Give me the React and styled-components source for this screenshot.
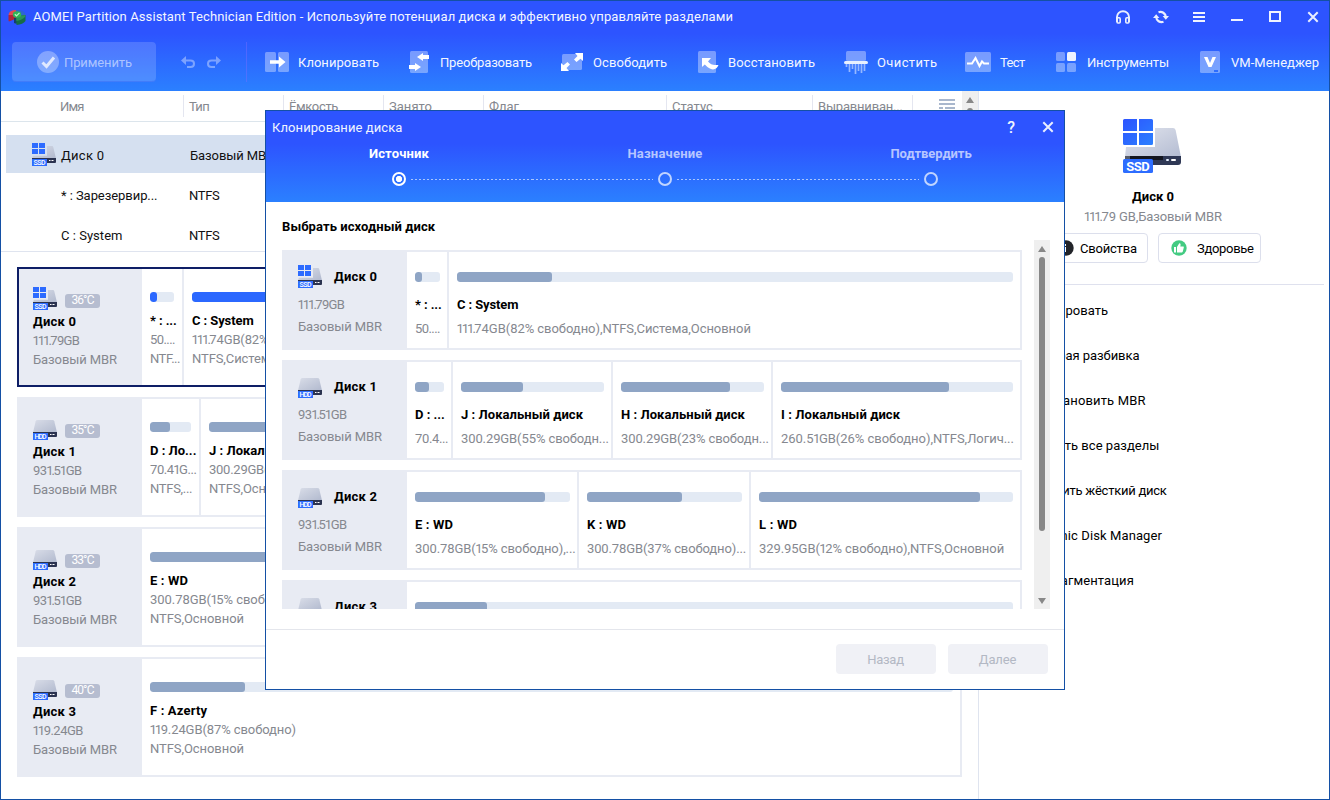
import React from 'react';
import styled, { createGlobalStyle, css } from 'styled-components';

const GlobalStyle = createGlobalStyle`
  *, *::before, *::after { box-sizing: border-box; }
  body { margin: 0; overflow: hidden; background: #fff; }
  #root { font: 400 13px/19px Roboto, "Noto Sans", sans-serif; color: #000; }
`;

const headerGradient = 'linear-gradient(180deg, #2d54ff 0%, #2d54ff 36%, #2b80ff 100%)';
const windowBorder = '#1450a5';

/* ---------- text ---------- */

const Text = styled.span`
  display: block;
  white-space: nowrap;
  letter-spacing: ${(p) => p.$ls || 0}px;
  font-weight: ${(p) => p.$weight || 400};
  color: ${(p) => p.$color || 'inherit'};
`;
const gray = '#85888f';
const Muted = (props) => <Text $color={gray} {...props} />;
const Strong = (props) => <Text $weight={700} {...props} />;

/* Sizes are set with narrow ones, as in a DIN-style typeface. */
const NarrowOnes = styled.span`
  letter-spacing: -2px;
  margin-left: -0.5px;
  margin-right: 0.5px;
`;
const Size = ({ ls, children }) => (
  <Muted $ls={ls}>
    {children.split(/(1+\.?)/).map((s, i) => (i % 2 ? <NarrowOnes key={i}>{s}</NarrowOnes> : s))}
  </Muted>
);

/* ---------- window frame ---------- */

const Window = styled.div`
  position: relative;
  display: flex;
  flex-direction: column;
  width: 1330px;
  height: 800px;
  border: 1px solid ${windowBorder};
  background: #fff;
  overflow: hidden;
`;

const Header = styled.header`
  height: 90px;
  flex: none;
  background: ${headerGradient};
  color: #f3f6ff;
`;

const TitleBar = styled.div`
  display: flex;
  align-items: center;
  height: 32px;
  padding: 0 8px 0 7px;
`;

const Title = styled(Text)`
  margin-left: 7px;
  padding-bottom: 2px;
  flex: 1;
`;

const WindowControls = styled.div`
  display: flex;
  align-items: center;
`;

const ControlButton = styled.span`
  display: flex;
  justify-content: center;
  width: 38px;
  &:last-child { width: 16px; margin-left: 11px; }
`;

const Toolbar = styled.nav`
  display: flex;
  align-items: center;
  height: 58px;
  padding: 0 0 0 11px;
`;

const ApplyButton = styled.div`
  display: flex;
  align-items: center;
  gap: 5px;
  width: 144px;
  height: 40px;
  padding-left: 25px;
  border-radius: 4px;
  background: rgba(255, 255, 255, 0.16);
  box-shadow: inset 0 -1px 0 rgba(30, 70, 230, 0.25);
  color: rgba(255, 255, 255, 0.55);
`;

const History = styled.div`
  display: flex;
  gap: 12px;
  width: 91px;
  height: 40px;
  align-items: center;
  padding-left: 25px;
  border-right: 1px solid rgba(120, 110, 255, 0.45);
  margin-right: 18px;
`;

const Tool = styled.div`
  display: flex;
  align-items: center;
  flex: none;
  width: ${(p) => p.$w}px;
`;

const ToolIcon = styled.span`
  display: flex;
  flex: none;
  width: ${(p) => p.$w}px;
`;

const Body = styled.div`
  display: flex;
  flex: 1;
  min-height: 0;
`;

/* ---------- left pane ---------- */

const Main = styled.main`
  width: 978px;
  flex: none;
  border-right: 1px solid #dfe4ef;
`;

const TablePane = styled.section`
  display: flex;
  height: 161px;
  border-bottom: 1px solid #dfe4ef;
  overflow: hidden;
`;

const Table = styled.div`
  width: 961px;
`;

const TableHead = styled.div`
  display: flex;
  height: 31px;
  padding-top: 4px;
  border-bottom: 1px solid #dce5ec;
`;

const HeadCell = styled.div`
  height: 22px;
  width: ${(p) => p.$w}px;
  padding: 2px 0 0 ${(p) => p.$pad || 5}px;
  border-right: 1px solid #e4e6f0;
  flex: none;
`;

const HeadMenu = styled.div`
  padding: 4px 0 0 26px;
`;

const TableRow = styled.div`
  display: flex;
  align-items: center;
  height: 38px;
  margin: ${(p) => (p.$selected ? '13px 0 3px 5px' : '0 0 2px 5px')};
  background: ${(p) => (p.$selected ? '#d5e0f0' : 'transparent')};
  color: #111;
  padding-top: ${(p) => (p.$selected ? 2 : 0)}px;
`;

const NameCell = styled.div`
  display: flex;
  align-items: center;
  width: ${(p) => p.$w || 183}px;
  padding-left: ${(p) => (p.$icon ? 26 : 55)}px;
  gap: 5px;
`;

const ScrollTrack = styled.div`
  display: flex;
  flex-direction: column;
  align-items: center;
  width: ${(p) => p.$w || 16}px;
  background: #efefef;
  padding: 6px 0 5px;
`;

const ScrollThumb = styled.div`
  width: 6px;
  height: ${(p) => p.$h}px;
  margin-top: 5px;
  border-radius: 3px;
  background: #888;
`;

const Arrow = styled.i`
  width: 0;
  height: 0;
  border: 4px solid transparent;
  ${(p) =>
    p.$down
      ? css`border-top: 6px solid #888; border-bottom: 0; margin-top: auto;`
      : css`border-bottom: 6px solid #888; border-top: 0;`}
`;

const DiskList = styled.section`
  display: flex;
  flex-direction: column;
  gap: 10px;
  padding: 15px 16px 0;
`;

/* ---------- disk cards (main list and dialog) ---------- */

const Card = styled.article`
  display: flex;
  flex: none;
  height: ${(p) => (p.$dialog ? 100 : 120)}px;
  border: 2px solid ${(p) => (p.$selected ? '#0e1e66' : '#e8ebf3')};
  background: #fff;
`;

const DiskInfo = styled.div`
  flex: none;
  width: 123px;
  background: #e8ebf3;
  padding: ${(p) => (p.$dialog ? '12px 0 0 14px' : '17px 0 0 14px')};
`;

const DiskTop = styled.div`
  display: flex;
  align-items: center;
  height: 25px;
  gap: ${(p) => (p.$dialog ? 12 : 8)}px;
  margin-bottom: ${(p) => (p.$dialog ? 6 : 1)}px;
`;

const DiskLine = styled.div`
  height: ${(p) => p.$h}px;
`;

const Badge = styled.span`
  width: 35px;
  height: 14px;
  margin-top: 5px;
  border-radius: 3px;
  background: #b6bdd0;
  color: #fff;
  font-size: 12px;
  line-height: 13px;
  text-align: center;
  letter-spacing: -0.9px;
`;

const Partition = styled.div`
  flex: ${(p) => (p.$w ? `0 0 ${p.$w}px` : '1 1 0')};
  min-width: 0;
  overflow: hidden;
  padding: ${(p) => (p.$dialog ? 20 : 23)}px 0 0 8px;
  & + & { border-left: 2px solid #e8ebf3; }
`;

const Bar = styled.div`
  height: 10px;
  width: ${(p) => (p.$w ? `${p.$w}px` : 'calc(100% - 7px)')};
  border-radius: 3px;
  background: #e3eaf4;
  overflow: hidden;
  margin-bottom: ${(p) => (p.$dialog ? 13 : 9)}px;
`;

const Fill = styled.div`
  height: 100%;
  width: ${(p) => p.$w}px;
  border-radius: 3px;
  background: ${(p) => (p.$selected ? '#2b68ff' : '#8fa5c5')};
`;

const PartitionLine = styled.div`
  height: ${(p) => (p.$dialog ? 24 : 19)}px;
  line-height: 19px;
`;

/* ---------- side pane ---------- */

const Side = styled.aside`
  flex: 1;
  padding-top: 28px;
  display: flex;
  flex-direction: column;
`;

const Summary = styled.div`
  display: flex;
  flex-direction: column;
  align-items: center;
  padding-right: 2px;
`;

const SideName = styled(Strong)`
  margin: 12px 0 1px;
`;

const SideButtons = styled.div`
  display: flex;
  gap: 10px;
  margin: 7px 0 21px;
`;

const SideButton = styled.div`
  display: flex;
  align-items: center;
  width: 103px;
  height: 30px;
  padding: 0 0 0 12px;
  gap: ${(p) => p.$gap}px;
  border: 1px solid #dcdfec;
  border-radius: 4px;
`;

const SideMenu = styled.ul`
  list-style: none;
  margin: 0 5px 0 0;
  padding: 3px 0 0 48px;
  border-top: 1px solid #dfe1ee;
`;

const SideItem = styled.li`
  height: 45px;
  line-height: 45px;
`;

/* ---------- dialog ---------- */

const Dialog = styled.section`
  position: absolute;
  left: 264px;
  top: 109px;
  width: 800px;
  height: 580px;
  display: flex;
  flex-direction: column;
  border: 1px solid ${windowBorder};
  background: #fff;
`;

const DialogHeader = styled.header`
  height: 91px;
  flex: none;
  background: ${headerGradient};
  color: #f0f4ff;
`;

const DialogTitle = styled.div`
  display: flex;
  justify-content: space-between;
  align-items: center;
  height: 32px;
  margin-bottom: 1px;
  padding: 0 10px 0 6px;
`;

const DialogActions = styled.div`
  display: flex;
  align-items: center;
  gap: 27px;
`;

const HelpMark = styled(Text)`
  font-size: 16px;
  font-weight: 500;
`;

const Steps = styled.div`
  display: flex;
  justify-content: center;
`;

const Step = styled.div`
  width: 266px;
  display: flex;
  flex-direction: column;
  align-items: center;
  color: ${(p) => (p.$active ? '#fff' : 'rgba(255,255,255,0.66)')};
`;

const StepMark = styled.div`
  display: flex;
  align-items: center;
  width: 100%;
  height: 14px;
  margin-top: 9px;
  gap: 5px;
`;

const StepLine = styled.svg`
  flex: 1;
  height: 1px;
  width: 0;
  visibility: ${(p) => (p.$hidden ? 'hidden' : 'visible')};
`;

const StepDot = styled.span`
  width: 14px;
  height: 14px;
  border-radius: 50%;
  border: 2px solid ${(p) => (p.$active ? '#fff' : 'rgba(255,255,255,0.7)')};
  background: ${(p) => (p.$active ? 'radial-gradient(circle, #fff 0 2.8px, transparent 3.5px)' : 'transparent')};
`;

const DialogHeading = styled.div`
  height: 38px;
  padding: 15px 0 0 16px;
`;

const DialogScroll = styled.div`
  display: flex;
  height: 369px;
  padding-left: 16px;
  overflow: hidden;
`;

const DialogList = styled.div`
  display: flex;
  flex-direction: column;
  gap: 10px;
  width: 740px;
  padding-top: 10px;
  margin-right: 12px;
  overflow: hidden;
`;

const DialogFooter = styled.footer`
  display: flex;
  justify-content: flex-end;
  gap: 12px;
  margin-top: 20px;
  padding: 14px 16px 0;
  border-top: 1px solid #e4e6ec;
`;

const FooterButton = styled.div`
  display: flex;
  align-items: center;
  justify-content: center;
  width: 100px;
  height: 30px;
  padding: 1px 1px 0 0;
  border-radius: 4px;
  background: #f0f1f6;
  color: #b3b8c4;
`;

/* ---------- icons ---------- */

function DiskIcon({ kind, windows, size = 24 }) {
  if (size > 24) {
    return (
      <svg width="60" height="56" viewBox="0 0 60 56">
        <defs>
          <linearGradient id="shellL" x1="0" y1="0" x2="1" y2="1">
            <stop offset="0" stopColor="#e2e5ee" />
            <stop offset="1" stopColor="#b4bcd2" />
          </linearGradient>
          <linearGradient id="winL" x1="0" y1="0" x2="1" y2="1">
            <stop offset="0" stopColor="#2d54ff" />
            <stop offset="1" stopColor="#2b80ff" />
          </linearGradient>
        </defs>
        <path d="M32 9H50Q52 9 52.6 11L58 38H2L3 28H32Z" fill="url(#shellL)" />
        <path d="M2 37H58V43Q58 46 55 46H2Z" fill="#2f3855" />
        <path d="M7 37H40V41H7Z" fill="#14161f" />
        <path d="M2 37H7V41H2Z" fill="#555a68" />
        <rect x="43" y="40" width="3" height="2" rx="1" fill="#e6f0ff" />
        <rect x="48" y="40" width="5" height="2" rx="1" fill="#fff" />
        <path d="M1.500 0H14V12H0V1.500Q0 0 1.500 0ZM16 0H28.500Q30 0 30 1.500V12H16ZM0 14H14V26H1.500Q0 26 0 24.500ZM16 14H30V24.500Q30 26 28.500 26H16Z" fill="url(#winL)" />
        <rect x="0" y="40" width="30" height="14" rx="1.500" fill="#2d6dff" />
        <text x="15" y="51.700" textAnchor="middle" textLength="23.500" fontFamily="Roboto, sans-serif" fontWeight="700" fontSize="13" fill="#fff">{kind}</text>
      </svg>
    );
  }
  const shell = windows ? 'M15 3H20Q21 3 21.300 4.200L24 15.500H0L.8 12.800H15Z' : 'M4.500 3H19.500Q21 3 21.300 4.200L24 15.500H0L2.700 4.200Q3 3 4.500 3Z';
  return (
    <svg width="24" height="24" viewBox="0 0 24 24">
      <defs>
        <linearGradient id="shellS" x1="0" y1="0" x2="1" y2="1">
          <stop offset="0" stopColor="#d9dde8" />
          <stop offset="1" stopColor="#b1b9ce" />
        </linearGradient>
      </defs>
      <path d={shell} fill="url(#shellS)" />
      <path d="M0 15H24V19Q24 20 23 20H0Z" fill="#2b3350" />
      <rect x="17" y="17" width="1.500" height="1" fill="#fff" />
      <rect x="19.500" y="17" width="2" height="1" fill="#fff" />
      {windows && <path d="M0 0H6V5H0ZM7 0H13V5H7ZM0 6H6V11H0ZM7 6H13V11H7Z" fill="#2d6bff" />}
      <rect x="0" y="16" width="15" height="7" fill="#2d6dff" />
      <text x="7.500" y="22" textAnchor="middle" textLength="12" fontFamily="Roboto, sans-serif" fontWeight="500" fontSize="7" fill="#fff">{kind}</text>
    </svg>
  );
}

const Logo = () => (
  <svg width="18" height="17" viewBox="0 0 18 17">
    <path d="M.5 6Q1 1 8 1L9 6Z" fill="#e04a55" />
    <path d="M.5 6V11.500L1 12.500L6 10.500V14Q8 14 9 13.500V6Z" fill="#b3243a" />
    <path d="M6 9H9V14.500Q7 14.500 6 14Z" fill="#14406b" />
    <path d="M8 1H12Q17.500 2 17.500 6.500L12 8Z" fill="#2d66cf" />
    <path d="M8 7.500L17.500 6V12Q15 15.500 8.500 16Z" fill="#176c45" />
    <path d="M8 7.500L17.500 6Q17.500 10 8.500 12Z" fill="#2a9457" />
    <ellipse cx="9" cy="5.500" rx="4.200" ry="3.200" fill="#2fb457" />
    <path d="M6.800 5.200L8.500 6.800L11.500 3.800" fill="none" stroke="#b9f5c4" strokeWidth="1.200" />
  </svg>
);

const HeadphonesIcon = () => (
  <svg width="16" height="16" viewBox="0 0 16 16" fill="none" stroke="#e9eeff" strokeWidth="2">
    <path d="M2 13V8A6 5.800 0 0 1 14 8V13" />
    <path d="M2 8.800H4.200Q5.200 8.800 5.200 10V13Q5.200 14 4.200 14H3Q2 14 2 13M14 8.800H11.800Q10.800 8.800 10.800 10V13Q10.800 14 11.800 14H13Q14 14 14 13" strokeWidth="1.600" />
  </svg>
);
const RefreshIcon = () => (
  <svg width="16" height="14" viewBox="0 0 16 14">
    <path d="M5.500 2.200A5.400 5.400 0 0 1 12.800 7M10.500 11.800A5.400 5.400 0 0 1 3.200 7" fill="none" stroke="#e9eeff" strokeWidth="2.200" />
    <path d="M9.600 6H16L12.800 9.800ZM6.400 8H0L3.200 4.200Z" fill="#e9eeff" />
  </svg>
);
const MenuIcon = () => (
  <svg width="12" height="12" viewBox="0 0 12 12"><path d="M0 2H12M0 6H12M0 10H12" stroke="#f0f3ff" strokeWidth="2" /></svg>
);
const MinimizeIcon = () => (
  <svg width="12" height="12" viewBox="0 0 12 12"><path d="M0 9H12" stroke="#f0f3ff" strokeWidth="2" /></svg>
);
const MaximizeIcon = () => (
  <svg width="12" height="12" viewBox="0 0 12 12"><rect x="1" y="1" width="10" height="9" fill="none" stroke="#f0f3ff" strokeWidth="2" /></svg>
);
const CloseIcon = () => (
  <svg width="12" height="12" viewBox="0 0 12 12"><path d="M1.300 1.300L10.700 10.700M10.700 1.300L1.300 10.700" stroke="#e9eeff" strokeWidth="2" /></svg>
);
const CheckIcon = () => (
  <svg width="22" height="22" viewBox="0 0 22 22">
    <circle cx="11" cy="11" r="11" fill="#fff" opacity=".3" />
    <path d="M5.500 11.500L9.500 15.500L17 6.500" fill="none" stroke="#fff" strokeOpacity=".75" strokeWidth="3" />
  </svg>
);
const UndoIcon = ({ flip }) => (
  <svg width="14" height="13" viewBox="0 0 14 13">
    <g transform={flip ? 'translate(14 0) scale(-1 1)' : undefined} opacity=".38">
      <path d="M3 4.500H9.500Q13 4.500 13 7.700Q13 11 9.500 11H6" fill="none" stroke="#fff" strokeWidth="2" />
      <path d="M0 4.500L5 0V9Z" fill="#fff" />
    </g>
  </svg>
);

const panel = 'rgba(255,255,255,0.36)';
const toolIcons = {
  clone: (
    <svg width="24" height="20" viewBox="0 0 24 20">
      <rect width="11" height="20" rx="1.500" fill={panel} />
      <rect x="13" width="11" height="20" rx="1.500" fill={panel} />
      <path d="M5 8.200H14V4.500L20.500 10L14 15.500V11.800H5Z" fill="#fff" />
    </svg>
  ),
  convert: (
    <svg width="20" height="22" viewBox="0 0 20 22">
      <rect x="1" width="18" height="22" rx="1.500" fill={panel} />
      <path d="M20 4H14V2L8 6L14 10V8H20ZM0 14H6V12L12 16L6 20V18H0Z" fill="#fff" />
    </svg>
  ),
  free: (
    <svg width="22" height="18" viewBox="0 0 22 18">
      <rect x="1" y="1" width="20" height="16" rx="1.500" fill={panel} />
      <path d="M14 0H22V8L19.500 5.700L15.500 9L13 6.500L16.500 3ZM8 18H0V10L2.500 12.300L6.500 9L9 11.500L5.500 15Z" fill="#fff" />
    </svg>
  ),
  restore: (
    <svg width="21" height="22" viewBox="0 0 21 22">
      <rect width="18" height="22" rx="1.500" fill={panel} />
      <path d="M4 7H13L10 10.500Q13 14 17 14H20.500Q19 18 15 18.500Q11 18 6.800 13.500L4 16Z" fill="#fff" />
    </svg>
  ),
  wipe: (
    <svg width="24" height="23" viewBox="0 0 24 23">
      <rect x="2" width="20" height="10" rx="1.500" fill={panel} />
      <path d="M2.500 13V16M5.500 13V21M8.500 13V18M11.500 13V23M14.500 13V20M17.500 13V22M20.500 13V20" stroke="#fff" strokeOpacity=".5" strokeWidth="1.700" />
      <rect y="10" width="24" height="3" rx="1.500" fill="#e8f0ff" />
    </svg>
  ),
  test: (
    <svg width="26" height="20" viewBox="0 0 26 20">
      <rect width="26" height="20" rx="1.500" fill={panel} />
      <path d="M2 11.500H7L10.500 6L14.500 14L17 9.500L19 11.500H24" fill="none" stroke="#fff" strokeWidth="2" />
    </svg>
  ),
  tools: (
    <svg width="20" height="20" viewBox="0 0 20 20">
      <rect width="9" height="9" rx="1.500" fill={panel} />
      <rect x="11" width="9" height="9" rx="1.500" fill="#eef3ff" />
      <rect y="11" width="9" height="9" rx="1.500" fill={panel} />
      <rect x="11" y="11" width="9" height="9" rx="1.500" fill={panel} />
    </svg>
  ),
  vm: (
    <svg width="20" height="22" viewBox="0 0 20 22">
      <rect width="20" height="22" rx="1.500" fill={panel} />
      <path d="M4 6H7.500L10 12L12.500 6H16L11.500 16H8.500Z" fill="#fff" />
      <rect x="14" y="19" width="4" height="2" fill="#2d6dff" />
    </svg>
  ),
};

const ColumnsIcon = () => (
  <svg width="16" height="14" viewBox="0 0 16 14">
    <path d="M0 1H16M0 5H16M0 9H4M6 9H16M0 13H4M6 13H16" stroke="#a9b7cd" strokeWidth="2" />
  </svg>
);
const HealthIcon = () => (
  <svg width="16" height="16" viewBox="0 0 16 16">
    <circle cx="8" cy="8" r="7.700" fill="#43cb82" />
    <path d="M3 7H5V12.500H3ZM6 7L8.300 3.300Q10 3.200 9.600 5L9.300 6.500H12.300Q13 6.600 12.800 7.500L11.800 11.600Q11.500 12.500 10.700 12.500H6Z" fill="#fff" />
  </svg>
);
const InfoIcon = () => (
  <svg width="16" height="16" viewBox="0 0 16 16">
    <circle cx="8" cy="8" r="7.700" fill="#222429" />
    <path d="M6 7H8V12H6ZM6 4H8V6H6Z" fill="#fff" />
  </svg>
);

/* ---------- data ---------- */

const tools = [
  { id: 'clone', w: 144, iw: 33, label: 'Клонировать', ls: 0.03 },
  { id: 'convert', w: 152, iw: 31, label: 'Преобразовать', ls: -0.17 },
  { id: 'free', w: 137, iw: 32, label: 'Освободить', ls: 0.07 },
  { id: 'restore', w: 146, iw: 30, label: 'Восстановить', ls: 0.14 },
  { id: 'wipe', w: 121, iw: 33, label: 'Очистить', ls: 0.37 },
  { id: 'test', w: 91, iw: 35, label: 'Тест', ls: -0.6 },
  { id: 'tools', w: 144, iw: 31, label: 'Инструменты', ls: -0.16 },
  { id: 'vm', w: 125, iw: 31, label: 'VM-Менеджер', ls: 0.03 },
];

const columns = [
  { w: 183, pad: 59, label: 'Имя', ls: -0.8 },
  { w: 100, label: 'Тип', ls: -0.7 },
  { w: 100, label: 'Ёмкость', ls: -0.35 },
  { w: 100, label: 'Занято', ls: 0.04 },
  { w: 183, label: 'Флаг' },
  { w: 146, label: 'Статус' },
  { w: 100, label: 'Выравниван...', ls: -0.19 },
];

const disks = [
  {
    name: 'Диск 0', size: '111.79GB', sizeLs: -0.7, kind: 'SSD', windows: true, temp: '36°C', selected: true,
    parts: [
      { w: 40, bar: 24, fill: 7, name: '* : ...', nls: -0.1, a: '50....', als: -0.56, b: 'NTF...', bls: -0.47 },
      { fill: 137, name: 'C : System', nls: -0.1, a: '111.74GB(82% свободно)', als: -0.15, b: 'NTFS,Система,Основной', bls: -0.1 },
    ],
  },
  {
    name: 'Диск 1', size: '931.51GB', sizeLs: -0.45, kind: 'HDD', temp: '35°C',
    parts: [
      { w: 57, bar: 41, fill: 20, name: 'D : Ло...', a: '70.41G...', als: -0.4, b: 'NTFS,...', bls: -0.3 },
      { w: 240, fill: 100, name: 'J : Локальный диск', nls: 0.02, a: '300.29GB(55% свободно)', als: -0.25, b: 'NTFS,Основной', bls: -0.07 },
      { w: 240, fill: 180, name: 'H : Локальный диск', a: '300.29GB(23% свободно)', als: -0.25, b: 'NTFS,Основной' },
      { fill: 200, name: 'I : Локальный диск', a: '260.51GB(26% свободно)', als: -0.25, b: 'NTFS,Логический' },
    ],
  },
  {
    name: 'Диск 2', size: '931.51GB', sizeLs: -0.45, kind: 'HDD', temp: '33°C',
    parts: [
      { w: 266, fill: 215, name: 'E : WD', nls: 0.15, a: '300.78GB(15% свободно)', als: -0.05, b: 'NTFS,Основной', bls: -0.07 },
      { w: 266, fill: 160, name: 'K : WD', a: '300.78GB(37% свободно)', als: -0.16, b: 'NTFS,Основной' },
      { fill: 240, name: 'L : WD', a: '329.95GB(12% свободно)', als: -0.1, b: 'NTFS,Основной' },
    ],
  },
  {
    name: 'Диск 3', size: '119.24GB', sizeLs: -0.5, kind: 'SSD', temp: '40°C',
    parts: [{ fill: 95, name: 'F : Azerty', nls: 0.15, a: '119.24GB(87% свободно)', als: -0.09, b: 'NTFS,Основной', bls: -0.07 }],
  },
];

const dialogDisks = [
  {
    ...disks[0],
    parts: [
      { w: 40, bar: 25, fill: 7, name: '* : ...', nls: -0.1, a: '50....', als: -0.56 },
      { fill: 95, name: 'C : System', nls: -0.12, a: '111.74GB(82% свободно),NTFS,Система,Основной', als: -0.05 },
    ],
  },
  {
    ...disks[1],
    parts: [
      { w: 44, bar: 29, fill: 14, name: 'D : ...', a: '70.4...', als: -0.35 },
      { w: 160, fill: 62, name: 'J : Локальный диск', nls: 0.05, a: '300.29GB(55% свободн...', als: -0.1 },
      { w: 160, fill: 109, name: 'H : Локальный диск', nls: 0.05, a: '300.29GB(23% свободн...', als: -0.1 },
      { fill: 168, name: 'I : Локальный диск', nls: 0.08, a: '260.51GB(26% свободно),NTFS,Логич...', als: -0.02 },
    ],
  },
  {
    ...disks[2],
    parts: [
      { w: 170, fill: 130, name: 'E : WD', nls: 0.15, a: '300.78GB(15% свободно),...', als: -0.08 },
      { w: 172, fill: 95, name: 'K : WD', nls: 0.15, a: '300.78GB(37% свободно)...', als: -0.12 },
      { fill: 221, name: 'L : WD', nls: 0.2, a: '329.95GB(12% свободно),NTFS,Основной', als: -0.06 },
    ],
  },
  { ...disks[3], parts: [{ fill: 72, name: 'F : Azerty', a: '119.24GB(87% свободно),NTFS,Основной', als: -0.1 }] },
];

const sideItems = [
  { label: 'Клонировать', ls: 0.03 },
  { label: 'Быстрая разбивка', ls: -0.04 },
  { label: 'Восстановить MBR', ls: 0.15 },
  { label: 'Удалить все разделы', ls: 0.03 },
  { label: 'Очистить жёсткий диск', ls: -0.25 },
  { label: 'Dynamic Disk Manager', ls: 0.1 },
  { label: 'Дефрагментация', ls: 0.1 },
];

const steps = [
  { label: 'Источник', ls: 0.16, active: true },
  { label: 'Назначение', ls: 0.21 },
  { label: 'Подтвердить', ls: -0.05 },
];

/* ---------- composite parts ---------- */

function Partitions({ parts, selected, dialog }) {
  return parts.map((p) => (
    <Partition key={p.name} $w={p.w} $dialog={dialog}>
      <Bar $w={p.bar} $dialog={dialog}>
        <Fill $w={p.fill} $selected={selected} />
      </Bar>
      <PartitionLine $dialog={dialog}><Strong $ls={p.nls}>{p.name}</Strong></PartitionLine>
      <PartitionLine $dialog={dialog}><Size ls={p.als}>{p.a}</Size></PartitionLine>
      {p.b && <PartitionLine><Muted $ls={p.bls}>{p.b}</Muted></PartitionLine>}
    </Partition>
  ));
}

function DiskCard({ disk }) {
  return (
    <Card $selected={disk.selected}>
      <DiskInfo>
        <DiskTop>
          <DiskIcon kind={disk.kind} windows={disk.windows} />
          <Badge>{disk.temp}</Badge>
        </DiskTop>
        <DiskLine $h={19}><Strong $ls={0.24}>{disk.name}</Strong></DiskLine>
        <DiskLine $h={19}><Size ls={disk.sizeLs}>{disk.size}</Size></DiskLine>
        <DiskLine $h={19}><Muted $ls={-0.1}>Базовый MBR</Muted></DiskLine>
      </DiskInfo>
      <Partitions parts={disk.parts} selected={disk.selected} />
    </Card>
  );
}

function DialogCard({ disk }) {
  return (
    <Card $dialog>
      <DiskInfo $dialog>
        <DiskTop $dialog>
          <DiskIcon kind={disk.kind} windows={disk.windows} />
          <Strong $ls={0.24}>{disk.name}</Strong>
        </DiskTop>
        <DiskLine $h={22}><Size ls={disk.sizeLs}>{disk.size}</Size></DiskLine>
        <DiskLine $h={22}><Muted $ls={-0.1}>Базовый MBR</Muted></DiskLine>
      </DiskInfo>
      <Partitions parts={disk.parts} dialog />
    </Card>
  );
}

const Dashes = ({ hidden }) => (
  <StepLine $hidden={hidden}>
    <line x1="0" y1=".5" x2="200" y2=".5" stroke="#fff" strokeOpacity=".6" strokeDasharray="2 2" />
  </StepLine>
);

function CloneDialog() {
  return (
    <Dialog>
      <DialogHeader>
        <DialogTitle>
          <Text $ls={0.09}>Клонирование диска</Text>
          <DialogActions>
            <HelpMark $weight={500}>?</HelpMark>
            <CloseIcon />
          </DialogActions>
        </DialogTitle>
        <Steps>
          {steps.map((s, i) => (
            <Step key={s.label} $active={s.active}>
              <Strong $ls={s.ls}>{s.label}</Strong>
              <StepMark>
                <Dashes hidden={i === 0} />
                <StepDot $active={s.active} />
                <Dashes hidden={i === steps.length - 1} />
              </StepMark>
            </Step>
          ))}
        </Steps>
      </DialogHeader>
      <DialogHeading><Strong $ls={0.08}>Выбрать исходный диск</Strong></DialogHeading>
      <DialogScroll>
        <DialogList>
          {dialogDisks.map((d) => <DialogCard key={d.name} disk={d} />)}
        </DialogList>
        <ScrollTrack>
          <Arrow />
          <ScrollThumb $h={274} />
          <Arrow $down />
        </ScrollTrack>
      </DialogScroll>
      <DialogFooter>
        <FooterButton><Text $ls={-0.3}>Назад</Text></FooterButton>
        <FooterButton><Text $ls={-0.16}>Далее</Text></FooterButton>
      </DialogFooter>
    </Dialog>
  );
}

export default function App() {
  return (
    <>
      <GlobalStyle />
      <Window>
        <Header>
          <TitleBar>
            <Logo />
            <Title $ls={0.11}>
              AOMEI Partition Assistant Technician Edition - Используйте потенциал диска и эффективно управляйте разделами
            </Title>
            <WindowControls>
              <ControlButton><HeadphonesIcon /></ControlButton>
              <ControlButton><RefreshIcon /></ControlButton>
              <ControlButton><MenuIcon /></ControlButton>
              <ControlButton><MinimizeIcon /></ControlButton>
              <ControlButton><MaximizeIcon /></ControlButton>
              <ControlButton><CloseIcon /></ControlButton>
            </WindowControls>
          </TitleBar>
          <Toolbar>
            <ApplyButton>
              <CheckIcon />
              <Text $ls={-0.12}>Применить</Text>
            </ApplyButton>
            <History>
              <UndoIcon />
              <UndoIcon flip />
            </History>
            {tools.map((t) => (
              <Tool key={t.id} $w={t.w}>
                <ToolIcon $w={t.iw}>{toolIcons[t.id]}</ToolIcon>
                <Text $ls={t.ls}>{t.label}</Text>
              </Tool>
            ))}
          </Toolbar>
        </Header>
        <Body>
          <Main>
            <TablePane>
              <Table>
                <TableHead>
                  {columns.map((c) => (
                    <HeadCell key={c.label} $w={c.w} $pad={c.pad}>
                      <Muted $ls={c.ls}>{c.label}</Muted>
                    </HeadCell>
                  ))}
                  <HeadMenu><ColumnsIcon /></HeadMenu>
                </TableHead>
                <TableRow $selected>
                  <NameCell $icon $w={184}>
                    <DiskIcon kind="SSD" windows />
                    <Text $ls={0.27}>Диск 0</Text>
                  </NameCell>
                  <Text $ls={-0.1}>Базовый MBR</Text>
                </TableRow>
                <TableRow>
                  <NameCell><Text $ls={-0.06}>* : Зарезервир...</Text></NameCell>
                  <Text $ls={-0.35}>NTFS</Text>
                </TableRow>
                <TableRow>
                  <NameCell><Text $ls={0.03}>C : System</Text></NameCell>
                  <Text $ls={-0.35}>NTFS</Text>
                </TableRow>
              </Table>
              <ScrollTrack>
                <Arrow />
                <ScrollThumb $h={60} />
                <Arrow $down />
              </ScrollTrack>
            </TablePane>
            <DiskList>
              {disks.map((d) => <DiskCard key={d.name} disk={d} />)}
            </DiskList>
          </Main>
          <Side>
            <Summary>
              <DiskIcon kind="SSD" windows size={60} />
              <SideName $ls={0.24}>Диск 0</SideName>
              <Size ls={-0.12}>111.79 GB,Базовый MBR</Size>
              <SideButtons>
                <SideButton $gap={6}>
                  <InfoIcon />
                  <Text $ls={-0.2}>Свойства</Text>
                </SideButton>
                <SideButton $gap={10}>
                  <HealthIcon />
                  <Text $ls={-0.3}>Здоровье</Text>
                </SideButton>
              </SideButtons>
            </Summary>
            <SideMenu>
              {sideItems.map((s) => (
                <SideItem key={s.label}><Text $ls={s.ls}>{s.label}</Text></SideItem>
              ))}
            </SideMenu>
          </Side>
        </Body>
        <CloneDialog />
      </Window>
    </>
  );
}
